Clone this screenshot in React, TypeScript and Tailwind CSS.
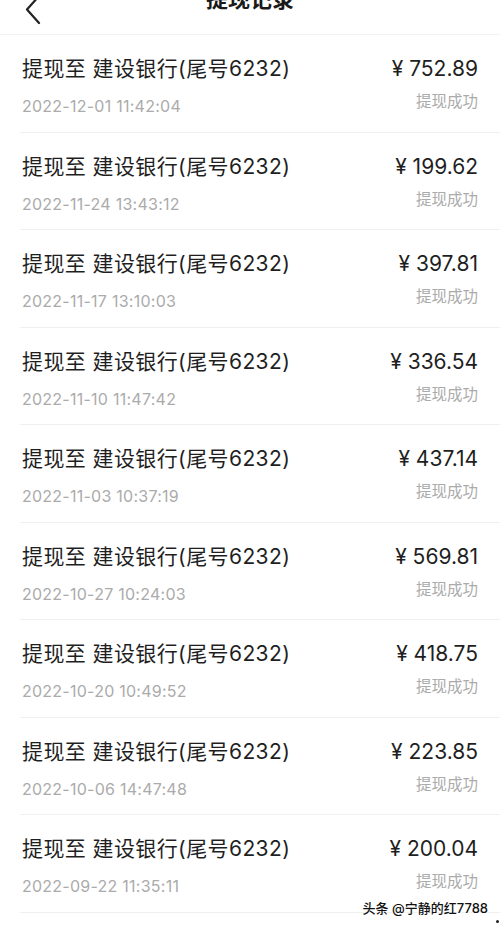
import React from "react";

const records = [
  { amount: "752.89", time: "2022-12-01 11:42:04" },
  { amount: "199.62", time: "2022-11-24 13:43:12" },
  { amount: "397.81", time: "2022-11-17 13:10:03" },
  { amount: "336.54", time: "2022-11-10 11:47:42" },
  { amount: "437.14", time: "2022-11-03 10:37:19" },
  { amount: "569.81", time: "2022-10-27 10:24:03" },
  { amount: "418.75", time: "2022-10-20 10:49:52" },
  { amount: "223.85", time: "2022-10-06 14:47:48" },
  { amount: "200.04", time: "2022-09-22 11:35:11" },
];

function RecordRow({ amount, time }: { amount: string; time: string }) {
  return (
    <div className="pl-[20px]">
      <div className="flex h-[96.5px] justify-between pr-[22px] pl-[2px] pt-[21px]">
        <div>
          <p className="text-[21px] leading-[26px] tracking-[0.4px] text-[#1f1f1f]">提现至 建设银行(尾号6232)</p>
          <p className="mt-[14px] text-[16px] leading-[20px] tracking-[0.25px] text-[#ababab]">{time}</p>
        </div>
        <div className="flex flex-col items-end">
          <p className="text-[21px] leading-[26px] text-[#1f1f1f]">¥ {amount}</p>
          <p className="mt-[10px] text-[15.5px] leading-[20px] text-[#ababab]">提现成功</p>
        </div>
      </div>
      <div className="h-px bg-[#f0f0f0]" />
    </div>
  );
}

export default function App() {
  return (
    <div className="relative h-[927px] w-[500px] overflow-hidden bg-white font-['Inter','Noto_Sans_CJK_SC',sans-serif]">
      {/* header, top part is cut off in the screenshot */}
      <div className="relative h-[35px] border-b border-[#f2f2f2]">
        <svg className="absolute left-[24px] top-[-6px]" width="18" height="32" viewBox="0 0 18 32" fill="none">
          <path d="M15 2 L3 15.5 L15 29" stroke="#222" strokeWidth="2.2" strokeLinecap="round" strokeLinejoin="round" />
        </svg>
        <p className="absolute left-0 right-0 top-[-16px] text-center text-[22px] font-bold leading-[30px] text-[#1a1a1a]">
          提现记录
        </p>
      </div>

      {records.map((r) => (
        <RecordRow key={r.time} amount={r.amount} time={r.time} />
      ))}

      <p className="absolute right-[12px] top-[898px] text-[13px] font-medium leading-[20px] text-[#111] [text-shadow:0_0_2px_#fff,0_0_2px_#fff,0_0_2px_#fff]">
        头条 @宁静的红7788
      </p>
      <div className="absolute left-[496px] top-[920px] h-[3px] w-[3px] rounded-full bg-[#222]" />
    </div>
  );
}
